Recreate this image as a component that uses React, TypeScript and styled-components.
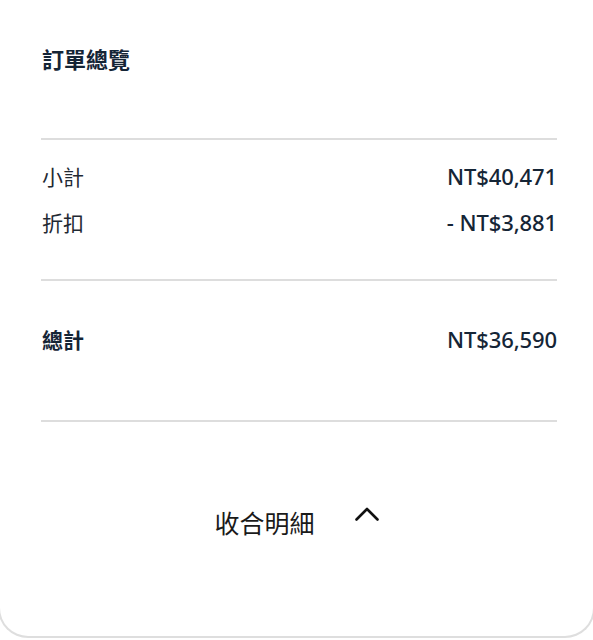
import React from "react";
import styled, { createGlobalStyle } from "styled-components";

const Global = createGlobalStyle`
  html, body { margin: 0; padding: 0; background: #ffffff; }
  body { font-family: "Noto Sans", "Noto Sans CJK TC", sans-serif; }
`;

const Card = styled.div`
  margin: 0 -2px;
  height: 638px;
  box-sizing: border-box;
  background: #ffffff;
  border: 2px solid #dedede;
  border-top: none;
  border-radius: 0 0 30px 30px;
  padding: 0 36px 0 42px;
  display: flex;
  flex-direction: column;
  color: #152536;
`;

const Section = styled.div<{ $top: number; $bottom: number; $gap?: number }>`
  padding-top: ${(p) => p.$top}px;
  padding-bottom: ${(p) => p.$bottom}px;
  display: flex;
  flex-direction: column;
  gap: ${(p) => p.$gap ?? 0}px;
`;

const Title = styled.h2`
  margin: 0;
  font-size: 22px;
  line-height: 30px;
  font-weight: 700;
  color: #152536;
`;

const Divider = styled.hr`
  margin: 0 0 0 -1px;
  border: none;
  height: 2px;
  background: #dddddd;
`;

const Row = styled.div`
  display: flex;
  justify-content: space-between;
  align-items: center;
  height: 30px;
`;

const Label = styled.span<{ $bold?: boolean }>`
  font-size: 21px;
  font-weight: ${(p) => (p.$bold ? 700 : 400)};
  color: ${(p) => (p.$bold ? "#152536" : "#1f2933")};
`;

const Amount = styled.span`
  font-size: 22px;
  font-weight: 500;
  color: #152536;
  letter-spacing: -0.1px;
`;

const Toggle = styled.button`
  align-self: center;
  margin-left: -6px;
  display: flex;
  align-items: center;
  gap: 40px;
  background: none;
  border: none;
  padding: 0;
  cursor: pointer;
  font-family: "Noto Sans", "Noto Sans CJK TC", sans-serif;
  font-size: 25px;
  line-height: 34px;
  color: #1a1a1a;
`;

const Chevron = styled.svg`
  width: 24px;
  height: 14px;
  margin-top: -18px;
`;

export default function App() {
  return (
    <>
      <Global />
      <Card>
        <Section $top={44} $bottom={64}>
          <Title>訂單總覽</Title>
        </Section>
        <Divider />
        <Section $top={21} $bottom={42} $gap={16}>
          <Row>
            <Label>小計</Label>
            <Amount>NT$40,471</Amount>
          </Row>
          <Row>
            <Label>折扣</Label>
            <Amount>- NT$3,881</Amount>
          </Row>
        </Section>
        <Divider />
        <Section $top={43} $bottom={66}>
          <Row>
            <Label $bold>總計</Label>
            <Amount>NT$36,590</Amount>
          </Row>
        </Section>
        <Divider />
        <Section $top={84} $bottom={0}>
          <Toggle>
            <span>收合明細</span>
            <Chevron viewBox="0 0 24 14" fill="none">
              <polyline
                points="1.5,12.5 12,2 22.5,12.5"
                stroke="#111111"
                strokeWidth="2.6"
                strokeLinecap="round"
                strokeLinejoin="round"
              />
            </Chevron>
          </Toggle>
        </Section>
      </Card>
    </>
  );
}
